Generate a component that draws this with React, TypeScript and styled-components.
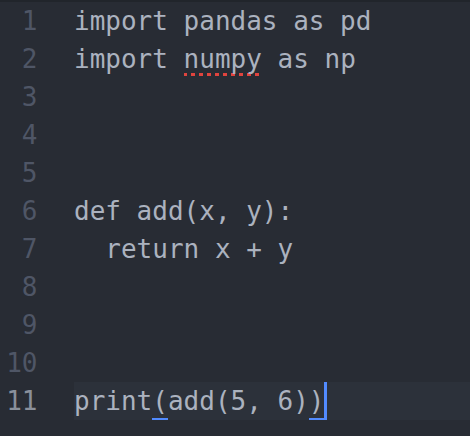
import React from "react";
import styled, { createGlobalStyle } from "styled-components";

const Global = createGlobalStyle`
  html, body { margin: 0; padding: 0; background: #282c34; }
  body { width: 470px; height: 436px; overflow: hidden; }
`;

const Editor = styled.div`
  width: 470px;
  height: 436px;
  box-sizing: border-box;
  background: #282c34;
  border-top: 2px solid #21252b;
  display: flex;
  flex-direction: column;
  font-family: "DejaVu Sans Mono", "Liberation Mono", monospace;
  font-size: 26px;
  line-height: 38px;
`;

const Row = styled.div`
  display: flex;
  height: 38px;
`;

const LineNumber = styled.div<{ $active?: boolean }>`
  width: 37.5px;
  text-align: right;
  color: ${(p) => (p.$active ? "#8a909b" : "#4f5666")};
  flex: none;
`;

const Code = styled.div<{ $active?: boolean }>`
  flex: 1;
  margin-left: 36.5px;
  white-space: pre;
  color: #abb2bf;
  background: ${(p) => (p.$active ? "#2c313a" : "transparent")};
`;

const Misspelled = styled.span`
  display: inline-block;
  height: 38px;
  background-image: linear-gradient(to right, #e0443e 4px, transparent 4px);
  background-size: 8px 3px;
  background-repeat: repeat-x;
  background-position: -1px 33px;
`;

const Bracket = styled.span`
  display: inline-block;
  height: 38px;
  box-shadow: inset 0 -2px 0 #528bff;
`;

const Cursor = styled.span`
  display: inline-block;
  width: 2.5px;
  height: 38px;
  vertical-align: top;
  background: #528bff;
`;

const lines: React.ReactNode[] = [
  "import pandas as pd",
  <>
    import <Misspelled>numpy</Misspelled> as np
  </>,
  "",
  "",
  "",
  "def add(x, y):",
  "  return x + y",
  "",
  "",
  "",
  <>
    print<Bracket>(</Bracket>add(5, 6)<Bracket>)</Bracket>
    <Cursor />
  </>,
];

export default function App() {
  return (
    <>
      <Global />
      <Editor>
        {lines.map((content, i) => {
          const active = i === lines.length - 1;
          return (
            <Row key={i}>
              <LineNumber $active={active}>{i + 1}</LineNumber>
              <Code $active={active}>{content}</Code>
            </Row>
          );
        })}
      </Editor>
    </>
  );
}
